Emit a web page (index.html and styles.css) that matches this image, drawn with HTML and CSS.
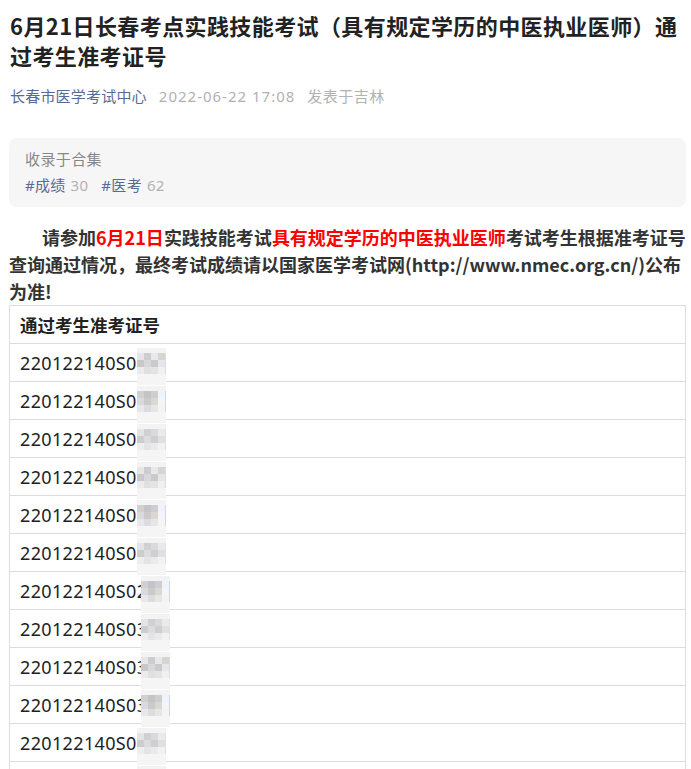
FILE: index.html
```html
<!DOCTYPE html>
<html lang="zh-CN">

<head>
  <meta charset="UTF-8">
  <meta name="viewport" content="width=device-width, initial-scale=1.0">
  <title>6月21日长春考点实践技能考试通过考生准考证号</title>
  <link rel="stylesheet" href="styles.css">
</head>

<body>
  <div class="page">
    <h1 class="title">6月21日长春考点实践技能考试（具有规定学历的中医执业医师）通过考生准考证号</h1>
    <div class="meta">
      <span class="author">长春市医学考试中心</span>
      <span class="time">2022-06-22 17:08</span>
      <span class="place">发表于吉林</span>
    </div>

    <!-- 合集 -->
    <div class="album">
      <div class="album-title">收录于合集</div>
      <div class="album-tags">
        <span class="tag">#成绩<em>30</em></span>
        <span class="tag">#医考<em>62</em></span>
      </div>
    </div>

    <p class="intro">请参加<span class="red">6月21日</span>实践技能考试<span class="red">具有规定学历的中医执业医师</span>考试考生根据准考证号查询通过情况，最终考试成绩请以国家医学考试网(http://www.nmec.org.cn/)公布为准!</p>

    <table class="list">
      <tr><th>通过考生准考证号</th></tr>
      <tr><td>220122140S0<i class="mask m1"></i></td></tr>
      <tr><td>220122140S0<i class="mask m2"></i></td></tr>
      <tr><td>220122140S0<i class="mask m3"></i></td></tr>
      <tr><td>220122140S0<i class="mask m1"></i></td></tr>
      <tr><td>220122140S0<i class="mask m2"></i></td></tr>
      <tr><td>220122140S0<i class="mask m3"></i></td></tr>
      <tr><td>220122140S02<i class="mask m2 shift"></i></td></tr>
      <tr><td>220122140S03<i class="mask m3 shift"></i></td></tr>
      <tr><td>220122140S03<i class="mask m1 shift"></i></td></tr>
      <tr><td>220122140S03<i class="mask m2 shift"></i></td></tr>
      <tr><td>220122140S0<i class="mask m3"></i></td></tr>
      <tr><td>220122140S0<i class="mask m1"></i></td></tr>
    </table>
  </div>
</body>

</html>
```

FILE: styles.css
```css
* {
  padding: 0;
  margin: 0;
}

body {
  background: #fff;
  font-family: "Noto Sans CJK SC", "Noto Sans", sans-serif;
  color: #222;
}

.page {
  padding: 10px 5px 0 9px;
}

.title {
  padding-left: 1px;
  font-size: 22px;
  line-height: 30px;
  font-weight: bold;
  color: #222;
  letter-spacing: 0.4px;
}

.meta {
  margin-top: 16px;
  padding-left: 1px;
  font-family: "Noto Sans", "Noto Sans CJK SC", sans-serif;
  font-size: 15px;
  line-height: 20px;
  display: flex;
  gap: 12px;
}

.author {
  color: #576b95;
  letter-spacing: 0.2px;
}

.time,
.place {
  color: #b2b2b2;
}

.time {
  letter-spacing: 1px;
}

.place {
  letter-spacing: 0.5px;
}

.album {
  margin-top: 32px;
  padding: 10px 16px 11px;
  background: #f6f6f6;
  border-radius: 8px;
  font-family: "Noto Sans", "Noto Sans CJK SC", sans-serif;
  font-size: 15px;
  line-height: 22px;
}

.album-title {
  color: #888;
  letter-spacing: 0.4px;
}

.album-tags {
  margin-top: 4px;
  display: flex;
  gap: 13px;
}

.tag {
  color: #576b95;
  letter-spacing: 0.3px;
}

.tag em {
  font-style: normal;
  color: #b2b2b2;
  margin-left: 5px;
}

.intro {
  margin-top: 17px;
  font-size: 18px;
  line-height: 27px;
  font-weight: bold;
  color: #333;
  text-indent: 33px;
}

.red {
  color: #ff0000;
}

.list {
  width: 100%;
  border-collapse: collapse;
  font-family: "Noto Sans", "Noto Sans CJK SC", sans-serif;
  font-size: 18px;
  color: #222;
}

.list th,
.list td {
  border: 1px solid #ddd;
  height: 37px;
  padding: 0 10px;
  text-align: left;
  line-height: 22px;
}

.list td {
  letter-spacing: 0.35px;
}

.list th {
  font-family: "Noto Sans CJK SC", sans-serif;
  font-size: 17.5px;
  font-weight: bold;
}

/* 打码 */
.mask {
  display: inline-grid;
  grid-template-columns: repeat(4, 7px);
  grid-auto-rows: 7px;
  width: 29px;
  height: 37px;
  padding: 5px 0 11px;
  box-sizing: border-box;
  vertical-align: top;
  margin: -4px 0 -33px;
  background: linear-gradient(#f3f3f3, #f3f3f3) 0 0 / 100% 5px no-repeat,
    linear-gradient(#f5f5f5, #f5f5f5) 0 100% / 100% 11px no-repeat;
}

.mask.shift {
  margin-left: -6px;
}

.m1 {
  background-color: #dcdcde;
}

.m2 {
  background-color: #d6d6d8;
}

.m3 {
  background-color: #e0e0e0;
}

.m1::before,
.m2::before,
.m3::before {
  content: "";
  grid-column: 1 / 5;
  grid-row: 1 / 4;
}

.m1::before {
  background: linear-gradient(90deg, #e6e6e8 0 7px, #cdcdcf 7px 14px, #e8e8e8 14px 21px, #d8d5d0 21px) 0 0 / 100% 7px no-repeat,
    linear-gradient(90deg, #c8c8ca 0 7px, #d8d8da 7px 14px, #cacacc 14px 21px, #e6e6e8 21px) 0 7px / 100% 7px no-repeat,
    linear-gradient(90deg, #ebebed 0 7px, #e0e0e2 7px 14px, #e4e4e4 14px 21px, #f0f0f0 21px) 0 14px / 100% 7px no-repeat;
}

.m2::before {
  background: linear-gradient(90deg, #d0d0d2 0 7px, #c4c4c6 7px 14px, #ceced0 14px 21px, #eef4fa 21px) 0 0 / 100% 7px no-repeat,
    linear-gradient(90deg, #dadadc 0 7px, #cacacc 7px 14px, #ddd7cf 14px 21px, #f0f6fc 21px) 0 7px / 100% 7px no-repeat,
    linear-gradient(90deg, #e8e8ea 0 7px, #dcdcde 7px 14px, #e6e6e6 14px 21px, #f4f4f4 21px) 0 14px / 100% 7px no-repeat;
}

.m3::before {
  background: linear-gradient(90deg, #e4e4e6 0 7px, #d0d0d2 7px 14px, #dadadc 14px 21px, #eaeaec 21px) 0 0 / 100% 7px no-repeat,
    linear-gradient(90deg, #cdcdcf 0 7px, #dcdcde 7px 14px, #cfcfd1 14px 21px, #e0e0e2 21px) 0 7px / 100% 7px no-repeat,
    linear-gradient(90deg, #eeeef0 0 7px, #e4e4e6 7px 14px, #eaeaea 14px 21px, #f2f2f2 21px) 0 14px / 100% 7px no-repeat;
}
```
